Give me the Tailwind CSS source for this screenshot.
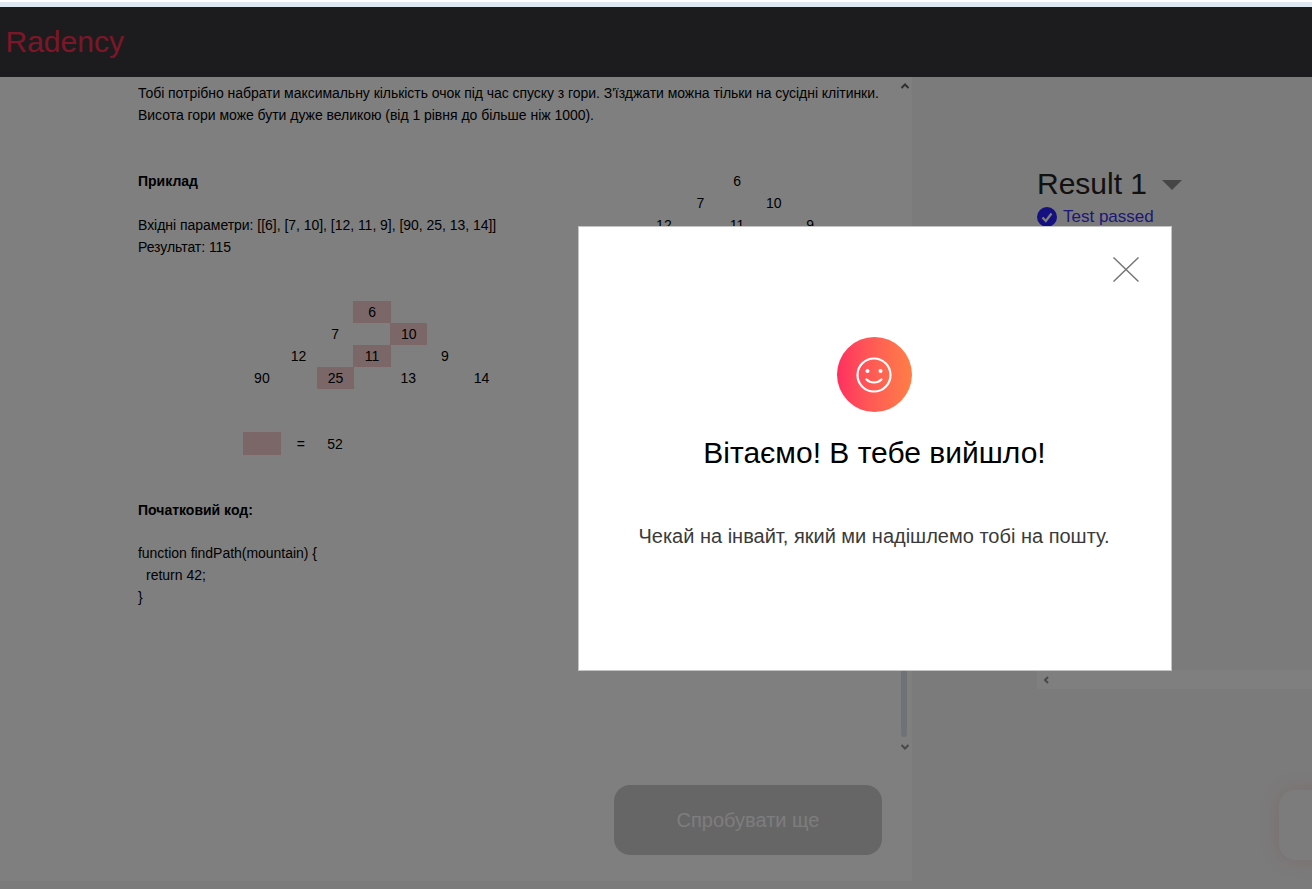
<!DOCTYPE html>
<html lang="uk">
<head>
    <meta charset="UTF-8">
    <title>Radency</title>
    <script src="https://cdn.jsdelivr.net/npm/@tailwindcss/browser@4"></script>
</head>
<body class="relative w-[1312px] h-[889px] overflow-hidden bg-[#f6f6f6] font-['Liberation_Sans',Arial,sans-serif] text-sm text-black">
    <div class="h-[2px] bg-white"></div>
    <div class="h-[5px] bg-[#dde8f1]"></div>

    <!-- Header -->
    <header class="h-[70px] bg-[#38383c] flex items-center pl-[5.5px]">
        <span class="text-[30px] leading-none text-[#fa2d50]">Radency</span>
    </header>

    <main class="flex h-[808px]">
        <!-- Task -->
        <section class="w-[912px] bg-white flex flex-col">
            <div class="relative h-[678px] pl-[138px] pt-[5px] leading-[22px]">
                <p class="tracking-[-0.04px]">Тобі потрібно набрати максимальну кількість очок під час спуску з гори. З'їзджати можна тільки на сусідні клітинки.</p>
                <p class="tracking-[-0.03px]">Висота гори може бути дуже великою (від 1 рівня до більше ніж 1000).</p>

                <div class="flex mt-[44px]">
                    <div class="w-[471px]">
                        <p class="font-bold">Приклад</p>
                        <p class="mt-[22px] tracking-[-0.03px]">Вхідні параметри: [[6], [7, 10], [12, 11, 9], [90, 25, 13, 14]]</p>
                        <p class="tracking-[-0.05px]">Результат: 115</p>

                        <div class="grid grid-cols-[repeat(7,36.6px)] auto-rows-[22px] text-center ml-[105.6px] mt-[43px]">
                            <div class="col-start-4 w-[37.5px] bg-[#f7cfcf]">6</div>
                            <div class="col-start-3 row-start-2">7</div>
                            <div class="col-start-5 row-start-2 w-[37.5px] bg-[#f7cfcf]">10</div>
                            <div class="col-start-2 row-start-3">12</div>
                            <div class="col-start-4 row-start-3 w-[37.5px] bg-[#f7cfcf]">11</div>
                            <div class="col-start-6 row-start-3">9</div>
                            <div class="col-start-1 row-start-4">90</div>
                            <div class="col-start-3 row-start-4 w-[37.5px] bg-[#f7cfcf]">25</div>
                            <div class="col-start-5 row-start-4">13</div>
                            <div class="col-start-7 row-start-4">14</div>
                        </div>

                        <div class="grid grid-cols-[repeat(7,36.6px)] auto-rows-[23px] leading-[24px] text-center ml-[105px] mt-[43px]">
                            <div class="w-[38px] bg-[#f7cfcf]"></div>
                            <div class="pl-[6px]">=</div>
                            <div class="pl-[1px]">52</div>
                        </div>
                    </div>

                    <div class="grid grid-cols-[repeat(7,36.6px)] auto-rows-[22px] text-center h-fit">
                        <div class="col-start-4">6</div>
                        <div class="col-start-3 row-start-2">7</div>
                        <div class="col-start-5 row-start-2">10</div>
                        <div class="col-start-2 row-start-3">12</div>
                        <div class="col-start-4 row-start-3">11</div>
                        <div class="col-start-6 row-start-3">9</div>
                    </div>
                </div>

                <p class="font-bold mt-[44px]">Початковий код:</p>
                <p class="mt-[21px] tracking-[-0.03px]">function findPath(mountain) {</p>
                <p class="pl-[8px]">return 42;</p>
                <p>}</p>

                <!-- Scrollbar -->
                <svg class="absolute right-[2px] top-[5px] w-[10px] h-[8px] text-[#606060]" viewBox="0 0 10 8" fill="none" stroke="currentColor" stroke-width="2"><path d="M1.5 6 5 2.500 8.500 6"/></svg>
                <div class="absolute right-[5px] top-[300px] bottom-[18px] w-[6px] rounded-[3px] bg-[#dde6ee]"></div>
                <svg class="absolute right-[2px] bottom-[4px] w-[10px] h-[8px] text-[#909090]" viewBox="0 0 10 8" fill="none" stroke="currentColor" stroke-width="2"><path d="M1.5 2 5 5.500 8.500 2"/></svg>
            </div>

            <button class="ml-[614px] mt-[30px] w-[268px] h-[70px] rounded-[16px] bg-[#cccccc] text-[#fafafa] text-[20px]">Спробувати ще</button>
            <div class="flex-1"></div>
            <div class="h-[4px] bg-[#f6f6f6]"></div>
        </section>

        <!-- Results -->
        <section class="flex-1 pl-[125px] pt-[90px]">
            <div class="flex items-center gap-[15px]">
                <span class="text-[30px] leading-[34px] text-[#222]">Result 1</span>
                <span class="w-0 h-0 border-x-[10px] border-x-transparent border-t-[10px] border-t-[#8c8c8c] mt-[1px]"></span>
            </div>
            <div class="flex items-center gap-[6px] mt-[5px] h-[22px]">
                <svg class="w-[20px] h-[20px]" viewBox="0 0 20 20"><circle cx="10" cy="10" r="10" fill="#2a20ff"/><path d="M5.5 10.500 8.800 14 14.500 6.500" fill="none" stroke="#fff" stroke-width="2.2"/></svg>
                <span class="text-[17px] text-[#3a30f0]">Test passed</span>
            </div>
            <div class="mt-[442px] h-[19px] bg-white flex items-center pl-[6px]">
                <svg class="w-[6px] h-[8px] text-[#909090]" viewBox="0 0 6 8" fill="none" stroke="currentColor" stroke-width="2"><path d="M5 1 2 4 5 7"/></svg>
            </div>
        </section>
    </main>

    <!-- Floating widget -->
    <div class="absolute left-[1279px] top-[790px] w-[60px] h-[70px] rounded-[16px] bg-[#f8f8f8] shadow-[0_0_20px_rgba(255,90,80,0.16)]"></div>

    <!-- Dialog -->
    <div class="absolute inset-x-0 top-[7px] bottom-0 bg-black/50"></div>
    <div class="absolute left-[578px] top-[226px] w-[594px] h-[445px] bg-white border border-[#c4c4c4] flex flex-col items-center pt-[110px]">
        <svg class="absolute right-[32px] top-[30px] w-[26px] h-[25px] text-[#777]" viewBox="0 0 26 25" fill="none" stroke="currentColor" stroke-width="1.5"><path d="M.5.5 25.500 24.500M25.500.5.5 24.500"/></svg>
        <div class="w-[75px] h-[75px] -translate-x-[1px] rounded-full bg-gradient-to-r from-[#ff2d5f] to-[#ff7e45] flex items-center justify-center">
            <svg class="w-[36px] h-[36px]" viewBox="0 0 36 36" fill="none" stroke="#fff" stroke-width="2.2"><circle cx="18" cy="18" r="16.500"/><circle cx="11.500" cy="14" r="2" fill="#fff" stroke="none"/><circle cx="24.500" cy="14" r="2" fill="#fff" stroke="none"/><path d="M10.500 22.500c4 4 11 4 15 0" stroke-linecap="round"/></svg>
        </div>
        <h2 class="mt-[23px] text-[30px] leading-[36px] text-black -translate-x-[0.5px]">Вітаємо! В тебе вийшло!</h2>
        <p class="mt-[52px] text-[20px] leading-[26px] text-[#3a3a3a] -translate-x-[1px]">Чекай на інвайт, який ми надішлемо тобі на пошту.</p>
    </div>
</body>
</html>
